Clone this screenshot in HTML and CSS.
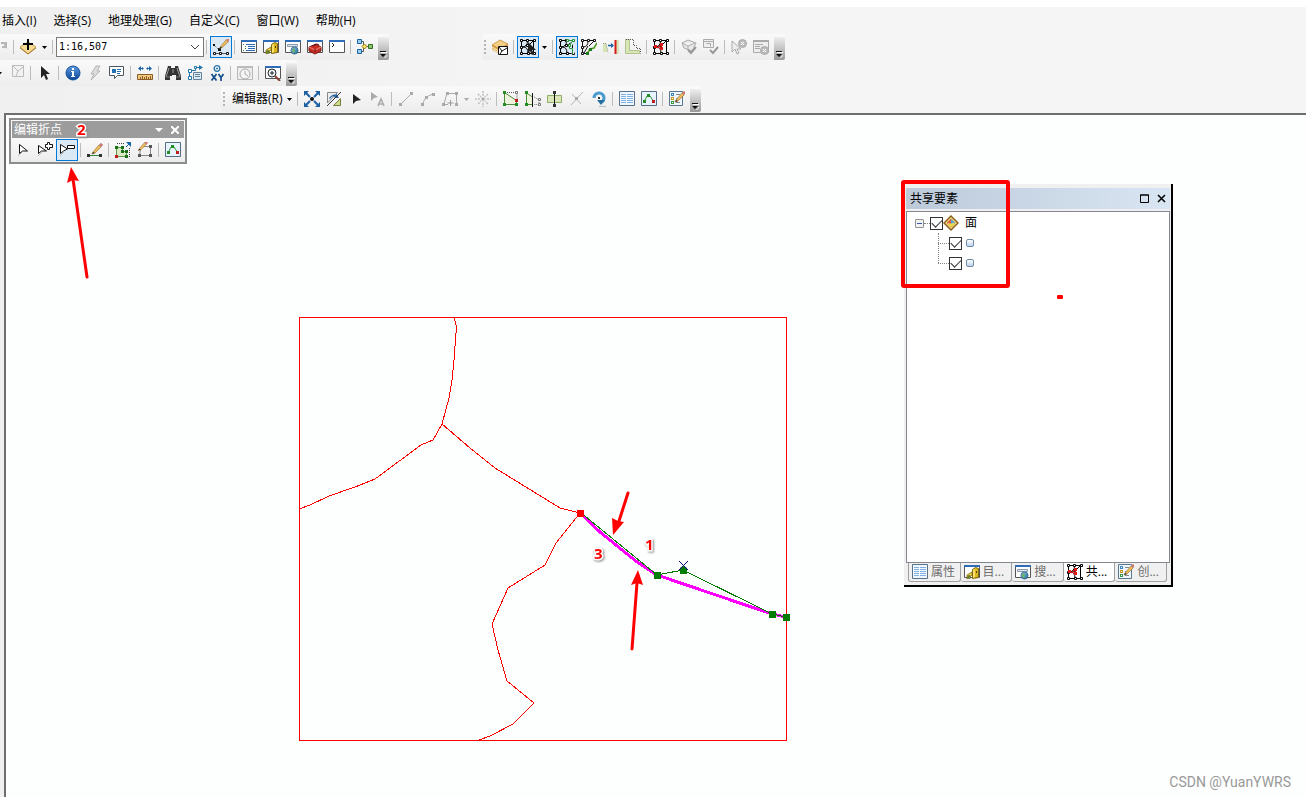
FILE: index.html
```html
<!DOCTYPE html>
<html lang="zh-CN">
<head>
<meta charset="utf-8">
<title>编辑折点</title>
<link rel="stylesheet" href="styles.css">
</head>
<body>
<svg class="sprite" aria-hidden="true">
  <defs>
    <linearGradient id="g-blue" x1="0" y1="0" x2="0" y2="1"><stop offset="0" stop-color="#5d9be0"/><stop offset="1" stop-color="#0b4796"/></linearGradient>
    <linearGradient id="g-globe" x1="0" y1="0" x2="1" y2="1"><stop offset="0" stop-color="#8cc4f0"/><stop offset="1" stop-color="#1f6e8e"/></linearGradient>
  </defs>
  <symbol id="pencil" viewBox="0 0 16 16"><path d="M6 10L12 3l2 2-6 6-3 1z" fill="#f0bd5c" stroke="#9a7333" stroke-width=".7"/><path d="M12 3l2-2 2 2-2 2z" fill="#d9776b" stroke="#a99" stroke-width=".5"/><path d="M5 12l1-2 2 1z" fill="#333"/></symbol>
  <symbol id="cut" viewBox="0 0 16 16"><path d="M9 4h3l2 3V3M14 8h-4" fill="none" stroke="#b5b5b5" stroke-width="2"/></symbol>
  <symbol id="adddata" viewBox="0 0 16 16"><path d="M0 8L8 3l8 5-8 7z" fill="#f8dc96" stroke="#c79b4b"/><path d="M0 9l8 6 8-6" fill="none" stroke="#a97a34"/><path d="M7 0h2v4h4v2H9v5H7V6H3V4h4z" fill="#000"/></symbol>
  <symbol id="editor" viewBox="0 0 16 16"><path d="M1 6l5 5" stroke="#444" stroke-dasharray="1 1"/><path d="M2 14.500h12" stroke="#555"/><path d="M.5 13.500h2v2h-2zM6.500 13.500h2v2h-2zM13.500 13.500h2v2h-2z" fill="#fff" stroke="#111"/><path d="M5 9h3v3H5zM0 5h2v2H0z" fill="#111"/><use href="#pencil" x="2" y="-2" width="15" height="15"/></symbol>
  <symbol id="win" viewBox="0 0 16 16"><path d="M.5 1.500h15v12H.5z" fill="#fff" stroke="#555"/><path d="M0 1h16v2H0z" fill="#2f6cb8"/></symbol>
  <symbol id="toc" viewBox="0 0 16 16"><use href="#win"/><path d="M2 5.500h1M4 7.500h1M4 9.500h1M2 11.500h1" stroke="#3a8a3a"/><path d="M5 5.500h9M7 7.500h7M7 9.500h7M5 11.500h9" stroke="#2b6bb5"/></symbol>
  <symbol id="catalog" viewBox="0 0 16 16"><use href="#win"/><path d="M8.500 5.500l3-2 3 1v9l-6 1z" fill="#dcb61d" stroke="#7f6810"/><path d="M9 6l2-1v8l-2 1z" fill="#f8e06a"/><path d="M12 7h1v2h-1z" fill="#554300"/><path d="M3 11l5-3v3l-5 4z" fill="#f5d84a" stroke="#7f6810" stroke-width=".8"/><circle cx="5" cy="13" r="2" fill="#6e7d2c"/></symbol>
  <symbol id="search" viewBox="0 0 16 16"><use href="#win"/><path d="M2.500 5.500h10v2h-10z" fill="#dbe6f0" stroke="#8b9aab"/><circle cx="9.500" cy="11.500" r="3.600" fill="url(#g-globe)" stroke="#315f85" stroke-width=".8"/><path d="M8 9l2 2-1 3-2-2z" fill="#70b45d"/></symbol>
  <symbol id="toolbox" viewBox="0 0 16 16"><use href="#win"/><path d="M2 8l7-3 5 3v4l-6 3-6-3z" fill="#c92e24" stroke="#7d160f"/><path d="M2 8l6 3 6-3" stroke="#ec887b" fill="none"/><path d="M6 7l4-2 2 1M8 10v3" stroke="#5a1510" fill="none"/></symbol>
  <symbol id="python" viewBox="0 0 16 16"><use href="#win"/><path d="M3 4l2 2-2 2" fill="none" stroke="#222"/></symbol>
  <symbol id="model" viewBox="0 0 16 16"><path d="M4 2.500h2.500v10H4M7 7.500h5" fill="none" stroke="#555"/><path d="M.5.5h4v4h-4zM.5 10.500h4v4h-4z" fill="#9dcdf1" stroke="#1965a5"/><path d="M7.500 5l2.500 2.500-2.500 2.500L5 7.500z" fill="#ffe568" stroke="#947610"/><path d="M11.500 5.500h4v4h-4z" fill="#86c86b" stroke="#356c24"/></symbol>
  <symbol id="selfeat" viewBox="0 0 16 16"><path d="M0 6l8-5 8 4v6l-8 4-8-4z" fill="#d99c43"/><path d="M0 6l8-5 8 4-8 5z" fill="#f6cf87" stroke="#b9812f" stroke-width=".6"/><path d="M0 8l7 4M0 10l6 3" stroke="#fff1cc"/><path d="M6.500 7.500h9v8h-9z" fill="#fff" stroke="#111"/><path d="M7 8l3 4 5-3M10 12l-2 3" fill="none" stroke="#111"/></symbol>
  <symbol id="topo" viewBox="0 0 16 16"><path d="M1.500 1.500h12v13h-12zM1.500 8q6 0 6-6M3 8q5 0 5 6M8 7l5-5" fill="none" stroke="currentColor" stroke-width="1"/><path d="M.5.5h2v2h-2zM6.500.5h2v2h-2zM13.500.5h2v2h-2zM.5 7.500h2v2h-2zM.5 13.500h2v2h-2zM7.500 13.500h2v2h-2zM13.500 13.500h2v2h-2zM6.500 5.500h2v2h-2z" fill="#fff" stroke="currentColor"/></symbol>
  <symbol id="topoedit" viewBox="0 0 16 16"><use href="#topo"/><path d="M8 3v11l2-2 2 4 2-1-2-4h4z" fill="#222"/></symbol>
  <symbol id="modedge" viewBox="0 0 16 16"><use href="#topo"/><path d="M8 1.500h6l-3 6v3h3v4" stroke="#dbe9f5" stroke-width="3" fill="none"/><path d="M8 1.500h6l-3.500 5v3h3v5" stroke="#249532" fill="none"/><path d="M7.500.5h2v2h-2zM13.500.5h2v2h-2zM9.500 5.500h2v2h-2z" fill="#fff" stroke="#249532"/></symbol>
  <symbol id="reshape" viewBox="0 0 16 16"><path d="M1 1.500h12M1.500 2v12M2 8q5 0 5-6M8 7l5-5M7 7l-4 7M2 14.500h4" stroke="#111" fill="none"/><path d="M.5.5h2v2h-2zM6.500.5h2v2h-2zM12.500.5h2v2h-2zM.5 13.500h2v2h-2zM.5 7.500h2v2h-2z" fill="#fff" stroke="#111"/><path d="M6 15l3-5 4-1 3-5" stroke="#4c9c21" fill="none" stroke-width="1.500"/><path d="M8 9h3v3H8zM5 13h3v3H5z" fill="#1d7b1b"/></symbol>
  <symbol id="align" viewBox="0 0 16 16"><path d="M0 4h3l2 9H0zM13 1h3v14h-3z" fill="#d8e5b7"/><path d="M0 4.500h3l2 9" fill="none" stroke="#999" stroke-dasharray="1 1"/><path d="M5 6.500h5" stroke="#1763a7" stroke-width="1.500"/><path d="M8 4l3 2.500L8 9z" fill="#1763a7"/><path d="M12.500 1v14" stroke="#d61d1d" stroke-width="2"/></symbol>
  <symbol id="general" viewBox="0 0 16 16"><path d="M.5.5h4v11h10v3H.5z" fill="#d8e7b4" stroke="#b4c292"/><path d="M1 .5h7.500v6h3v3h4v5" stroke="#555" stroke-dasharray="1 1" fill="none"/></symbol>
  <symbol id="share" viewBox="0 0 16 16"><use href="#topo"/><path d="M2 7l3 2V8l3-3v5L5 8" fill="none" stroke="#e01717"/><path d="M1 6h3v3H1zM7 4h3v3H7zM7 8h3v3H7z" fill="#e01717"/></symbol>
  <symbol id="validate" viewBox="0 0 16 16"><path d="M1 4l6-3 8 3-4 8-8-3zM1 4l6 3 7-3M7 7v4" fill="#e8e8e8" stroke="#aaa"/><path d="M7 11l3 3 5-6" stroke="#999" stroke-width="2" fill="none"/></symbol>
  <symbol id="validate2" viewBox="0 0 16 16"><path d="M.5.5h10v8H.5zM1 2.500h10M3.500 4.500h4v3" fill="#eee" stroke="#aaa"/><path d="M7 11l3 3 5-6" stroke="#999" stroke-width="2" fill="none"/></symbol>
  <symbol id="fixtopo" viewBox="0 0 16 16"><path d="M1 2v11l3-3 2 5 2-1-2-4h4z" fill="#eee" stroke="#aaa"/><circle cx="11.500" cy="4.500" r="4" fill="#bbb" stroke="#aaa"/><path d="M10 3l3 3M13 3l-3 3" stroke="#fff"/></symbol>
  <symbol id="inspect" viewBox="0 0 16 16"><path d="M.5 1.500h15v12H.5z" fill="#eee" stroke="#aaa"/><path d="M0 1h16v2H0z" fill="#aaa"/><path d="M2 5.500h8M2 7.500h5M2 9.500h5" stroke="#aaa"/><circle cx="11.500" cy="11.500" r="4" fill="#bbb" stroke="#aaa"/><path d="M10 10l3 3M13 10l-3 3" stroke="#fff"/></symbol>
  <symbol id="unselect" viewBox="0 0 16 16"><path d="M3.500.5h11v11h-11z" fill="#f3f3f3" stroke="#bbb"/><path d="M4 1l5 5 5-4M9 6l-2 5" stroke="#bbb" fill="none"/></symbol>
  <symbol id="pointer" viewBox="0 0 16 16"><path d="M4 1v12l3-3 2 5 2-1-2-5h4z" fill="#222"/></symbol>
  <symbol id="info" viewBox="0 0 16 16"><circle cx="8" cy="8" r="7" fill="url(#g-blue)" stroke="#15509c"/><path d="M7 3h2v2H7zM6 6h3v5h1v1H6v-1h1V7H6z" fill="#fff"/></symbol>
  <symbol id="bolt" viewBox="0 0 16 16"><path d="M9 1h4l-3 5h3L4 15l3-6H4z" fill="#ddd" stroke="#b4b4b4"/></symbol>
  <symbol id="popup" viewBox="0 0 16 16"><path d="M.5 1.500h14v9h-6l-3 3v-3h-5z" fill="#fff" stroke="#4c5762"/><path d="M3 4h4v4H3zM8 4h4v1H8zM8 6h4v1H8zM8 8h3v1H8z" fill="#2270b2"/></symbol>
  <symbol id="measure" viewBox="0 0 16 16"><path d="M2 3.500h4M10 3.500h4" stroke="#1a62a8"/><path d="M1 3.500L4 1v5zM15 3.500L12 1v5zM7 3.500L5 2v3zM9 3.500L11 2v3z" fill="#1a62a8"/><path d="M.5 9.500h15v5H.5z" fill="#f0c983" stroke="#8a5b24"/><path d="M3.500 12v2M5.500 11v3M7.500 12v2M9.500 11v3M11.500 12v2M13.500 11v3" stroke="#8a5b24"/></symbol>
  <symbol id="find" viewBox="0 0 16 16"><path d="M3 1h3v2h4V1h3l3 10v4h-5v-5H7v1H5v4H0v-4z" fill="#343434"/><path d="M4 3L1 12M12 3l3 9M8 4v4" stroke="#9a9a9a"/><path d="M1 12h4M11 12h4" stroke="#777"/></symbol>
  <symbol id="route" viewBox="0 0 16 16"><path d="M2.500 12V5.500h6v-3h4" stroke="#2476a8" fill="none"/><path d="M12 0l4 2.500-4 2.500z" fill="#2476a8"/><path d="M1.500 4.500h3v3h-3zM1.500 11.500h3v3h-3zM7.500 1.500h2v2h-2z" fill="#fff" stroke="#2476a8"/><path d="M6.500 7.500h8v7h-8z" fill="#dceaf6" stroke="#66829b"/><path d="M8 9.500h5M8 11.500h5" stroke="#66829b"/></symbol>
  <symbol id="xy" viewBox="0 0 16 16"><circle cx="8" cy="3.500" r="2.800" fill="#fff" stroke="#2874aa" stroke-width="1.300"/><circle cx="8" cy="3.500" r="1" fill="#2874aa"/><path d="M2.500 9l5 6.500M7.500 9l-5 6.500M9.500 9l2.500 3.500L14.500 9M12 12v4" stroke="#124e89" stroke-width="1.700" fill="none"/></symbol>
  <symbol id="time" viewBox="0 0 16 16"><path d="M.5 1.500h15v13H.5z" fill="#eee" stroke="#b8b8b8"/><path d="M0 1h16v2H0z" fill="#bbb"/><circle cx="8" cy="9" r="5" fill="#f5f5f5" stroke="#aaa"/><path d="M8 6v3l3 2" fill="none" stroke="#aaa"/></symbol>
  <symbol id="viewer" viewBox="0 0 16 16"><use href="#win"/><circle cx="7" cy="8" r="4" fill="#eef5fb" stroke="#222"/><path d="M5 8h4M7 6v4" stroke="#222"/><path d="M10 11l5 5" stroke="#8c4137" stroke-width="2"/></symbol>
  <symbol id="zoomall" viewBox="0 0 16 16"><path d="M2 2l4 4M14 2l-4 4M2 14l4-4M14 14l-4-4" stroke="#1d5fa3" stroke-width="2"/><path d="M0 0h5L0 5zM16 0v5l-5-5zM0 16v-5l5 5zM16 16h-5l5-5z" fill="#1d5fa3"/><circle cx="8" cy="8" r="2" fill="#111"/></symbol>
  <symbol id="swap" viewBox="0 0 16 16"><path d="M1.500 1.500h10L1.500 12z" fill="#eee" stroke="#888"/><path d="M3 7q4-5 7-3V2l3 5H8l1-1Q6 4 4 8z" fill="#2768ac"/><path d="M1 15L15 1" stroke="#333"/><path d="M14.500 7.500v7h-7z" fill="#cddb8d" stroke="#75803f"/></symbol>
  <symbol id="edittool" viewBox="0 0 16 16"><path d="M5 3v10l3-3 5-1z" fill="#222"/></symbol>
  <symbol id="annotool" viewBox="0 0 16 16"><path d="M1 1v9l3-3 4-1z" fill="#aaa"/><path d="M8 15l3-7 3 7M9 13h4" fill="none" stroke="#aaa" stroke-width="1.500"/></symbol>
  <symbol id="line" viewBox="0 0 16 16"><path d="M2 14L14 2" stroke="#aaa"/><path d="M1 12h3v3H1zM12 1h3v3h-3z" fill="#aaa"/></symbol>
  <symbol id="arc" viewBox="0 0 16 16"><path d="M3 14q0-8 10-11" stroke="#aaa" fill="none"/><path d="M1 12h3v3H1zM5 5h3v3H5zM12 2h3v3h-3z" fill="#aaa"/></symbol>
  <symbol id="trace" viewBox="0 0 16 16"><path d="M5 2.500h9.500v11M1 13.500h5M5 2L2 13" stroke="#aaa" fill="none"/><path d="M4 1h3v3H4zM13 1h3v3h-3zM0 12h3v3H0zM13 12h3v3h-3z" fill="#aaa"/><path d="M8.500 9v6M5.500 12h6" stroke="#999"/></symbol>
  <symbol id="point" viewBox="0 0 16 16"><path d="M8 0v16M0 8h16M3 3l10 10M13 3L3 13" stroke="#c0c0c0" stroke-width="1.500" stroke-dasharray="2 1"/><path d="M6 6h4v4H6z" fill="#aaa" stroke="#f5f5f5"/></symbol>
  <symbol id="editvert" viewBox="0 0 16 16"><path d="M1.500 1.500v12h12v-4z" fill="#eef4dc" stroke="#4f8b3b"/><path d="M2 1.500h12v8" stroke="#555" stroke-dasharray="1 1" fill="none"/><path d="M0 0h3v3H0zM0 12h3v3H0zM12 12h3v3h-3z" fill="#218d23"/><path d="M12 8h3v3h-3z" fill="#c21d1d"/><path d="M12.500.5h2v2h-2z" fill="#fff" stroke="#777"/></symbol>
  <symbol id="reshape2" viewBox="0 0 16 16"><path d="M1.500 2v11.500h6V6z" fill="#eef4dc" stroke="#4f8b3b"/><path d="M9 6l5 3v4.500H9" stroke="#777" stroke-dasharray="1 1" fill="none"/><path d="M0 0h3v3H0zM0 12h3v3H0z" fill="#218d23"/><path d="M7.500 2v14" stroke="#111"/><path d="M13.500 7.500h2v2h-2zM13.500 12.500h2v2h-2z" fill="#fff" stroke="#777"/></symbol>
  <symbol id="cutpoly" viewBox="0 0 16 16"><path d="M.5 4.500h14v7H.5z" fill="#dbe7b9" stroke="#8fae66"/><path d="M7.500 1v14" stroke="#111"/><path d="M6 0h3v3H6zM6 13h3v3H6z" fill="#333"/></symbol>
  <symbol id="split" viewBox="0 0 16 16"><path d="M2 14L14 1M3 3l9 10" stroke="#b5b5b5"/><path d="M6 6h3v3H6z" fill="#aaa"/></symbol>
  <symbol id="rotate" viewBox="0 0 16 16"><path d="M3 7a5 5 0 1 1 8 4" fill="none" stroke="#4a9bce" stroke-width="3"/><path d="M6 9h8l-4 5z" fill="#26709f"/><path d="M7 6h2v2H7z" fill="#333"/><path d="M8 15.500h7" stroke="#bbb"/></symbol>
  <symbol id="table" viewBox="0 0 16 16"><path d="M.5.5h15v14H.5z" fill="#f1f8ff" stroke="#57718a"/><path d="M2 3.500h5M8 3.500h6M2 5.500h5M8 5.500h6M2 7.500h5M8 7.500h6M2 9.500h5M8 9.500h6M2 11.500h5M8 11.500h6" stroke="#7fb0df"/><path d="M7.500 2v11" stroke="#f1f8ff"/></symbol>
  <symbol id="sketch" viewBox="0 0 16 16"><path d="M.5.5h15v14H.5z" fill="#e7f4ff" stroke="#536d87"/><path d="M3 11l3-6h3l4 6" fill="none" stroke="#2d9338"/><path d="M6 3h3v3H6zM2 9h3v3H2z" fill="#218d23"/><path d="M11 9h3v3h-3z" fill="#c21d1d"/></symbol>
  <symbol id="create" viewBox="0 0 16 16"><path d="M.5.5h13v14H.5z" fill="#eef7ff" stroke="#5a7791"/><path d="M2 2h3v3H2z" fill="#3f84c4"/><path d="M2 6h3v3H2z" fill="#c6971f"/><path d="M2 10h3v3H2z" fill="#389447"/><path d="M3 3h1v1H3zM3 7h1v1H3zM3 11h1v1H3z" fill="#fff"/><path d="M7 3.500h4M7 7.500h2M7 11.500h4" stroke="#888"/><use href="#pencil" x="1" y="-1"/></symbol>
  <symbol id="vsel" viewBox="0 0 16 16"><path d="M3 14l4-4" stroke="#bbb"/><path d="M4.500 2.500v9l3-2.500h5z" fill="#fff" stroke="#111"/></symbol>
  <symbol id="vadd" viewBox="0 0 16 16"><path d="M1 14l4-4" stroke="#bbb"/><path d="M1.500 3.500v8l3-2.500h5z" fill="#fff" stroke="#111"/><path d="M10.500.5h2v2h3v3h-3v2h-2v-2h-2v-3h2z" fill="#fff" stroke="#111"/></symbol>
  <symbol id="vdel" viewBox="0 0 16 16"><path d="M1 14l4-4" stroke="#bbb"/><path d="M1.500 2.500v9l3-2.500 4-2z" fill="#fff" stroke="#111"/><path d="M8.500 3.500h7v3h-7z" fill="#fff" stroke="#111"/></symbol>
  <symbol id="cont" viewBox="0 0 16 16"><path d="M2 13.500h11" stroke="#2b8a34"/><path d="M0 12h3v3H0zM12 12h3v3h-3z" fill="#333"/><use href="#pencil"/></symbol>
  <symbol id="mod" viewBox="0 0 16 16"><path d="M1.500 5.500h6v4h4v5h-10z" fill="#dceac4" stroke="#5d9a45"/><path d="M0 4h3v3H0zM6 4h3v3H6zM6 8h3v3H6zM10 8h3v3h-3zM10 13h3v3h-3z" fill="#197019"/><path d="M0 13h3v3H0z" fill="#c21d1d"/><path d="M2 1.500h8M14.500 6v10" stroke="#444" stroke-dasharray="1 1"/><path d="M11 0h5v5z" fill="#1763a7"/><path d="M11 5l3-3" stroke="#1763a7"/></symbol>
  <symbol id="finish" viewBox="0 0 16 16"><path d="M7 4.500h6.500v9h-11l1-6" fill="none" stroke="#888"/><path d="M12 3h3v3h-3zM1 12h3v3H1zM12 12h3v3h-3z" fill="#555"/><use href="#pencil" x="-3" y="-2" width="14" height="14"/></symbol>
  <symbol id="layer" viewBox="0 0 16 16"><path d="M8 1l7 7-7 7-7-7z" fill="#f6d680" stroke="#8c6222" stroke-width="1.500"/><path d="M8 4l4 4-4 4-4-4z" fill="#fff" stroke="#936721" stroke-width=".6"/><path d="M8 4L4 8l4 1z" fill="#e65a31"/><path d="M8 4l4 4-4 1z" fill="#51a7db"/><path d="M5 9l3 3 4-4z" fill="#f0e03e"/></symbol>
  <symbol id="down" viewBox="0 0 5 3"><path d="M0 0h5L2.500 3z" fill="currentColor"/></symbol>
  <symbol id="overflow" viewBox="0 0 7 7"><path d="M1 1h6v1H1zM4 7l3-3v1L5 7z" fill="#fff"/><path d="M0 0h6v1H0zM0 3h6L3 6z" fill="#111"/></symbol>
</svg>

<div class="app">
  <header class="chrome">
    <nav class="menu">
      <button>插入(I)</button><button>选择(S)</button><button>地理处理(G)</button><button>自定义(C)</button><button>窗口(W)</button><button>帮助(H)</button>
    </nav>
    <div class="row">
      <div class="bar bar-standard">
        <button class="tool tool-clipped" aria-label="粘贴"><svg><use href="#cut"/></svg></button><i class="sep"></i>
        <button class="tool" aria-label="添加数据"><svg><use href="#adddata"/></svg></button><button class="caret" aria-label="更多数据"><svg><use href="#down"/></svg></button><i class="sep"></i>
        <label class="scale"><select aria-label="比例尺"><option>1:16,507</option></select><svg viewBox="0 0 10 6"><path d="M1 1l4 4 4-4" fill="none" stroke="#444"/></svg></label><i class="sep"></i>
        <button class="tool is-on" aria-label="编辑器工具条"><svg><use href="#editor"/></svg></button><i class="sep"></i>
        <button class="tool" aria-label="内容列表"><svg><use href="#toc"/></svg></button><button class="tool" aria-label="目录"><svg><use href="#catalog"/></svg></button><button class="tool" aria-label="搜索"><svg><use href="#search"/></svg></button><button class="tool" aria-label="工具箱"><svg><use href="#toolbox"/></svg></button><button class="tool" aria-label="Python"><svg><use href="#python"/></svg></button><i class="sep"></i>
        <button class="tool" aria-label="模型构建器"><svg><use href="#model"/></svg></button><button class="more" aria-label="工具条选项"><svg><use href="#overflow"/></svg></button>
      </div>
      <div class="bar bar-topology">
        <i class="grip"></i><button class="tool" aria-label="选择拓扑"><svg><use href="#selfeat"/></svg></button><i class="sep"></i>
        <button class="tool is-on" aria-label="拓扑编辑"><svg><use href="#topoedit"/></svg></button><button class="caret" aria-label="拓扑编辑选项"><svg><use href="#down"/></svg></button><i class="sep"></i>
        <button class="tool is-on" aria-label="修改边"><svg><use href="#modedge"/></svg></button><button class="tool" aria-label="修整边"><svg><use href="#reshape"/></svg></button><button class="tool" aria-label="对齐边"><svg><use href="#align"/></svg></button><button class="tool" aria-label="概化边"><svg><use href="#general"/></svg></button><i class="sep"></i>
        <button class="tool" aria-label="共享要素"><svg><use href="#share"/></svg></button><i class="sep"></i>
        <button class="tool" aria-label="验证区域" disabled><svg><use href="#validate"/></svg></button><button class="tool" aria-label="验证范围" disabled><svg><use href="#validate2"/></svg></button><i class="sep"></i>
        <button class="tool" aria-label="修复错误" disabled><svg><use href="#fixtopo"/></svg></button><button class="tool" aria-label="错误检查器" disabled><svg><use href="#inspect"/></svg></button><button class="more" aria-label="工具条选项"><svg><use href="#overflow"/></svg></button>
      </div>
    </div>
    <div class="row">
      <div class="bar bar-tools">
        <button class="caret caret-clipped" aria-label="选择方式"><svg><use href="#down"/></svg></button><button class="tool" aria-label="清除选择" disabled><svg><use href="#unselect"/></svg></button><i class="sep"></i>
        <button class="tool" aria-label="选择元素"><svg><use href="#pointer"/></svg></button><i class="sep"></i>
        <button class="tool" aria-label="识别"><svg><use href="#info"/></svg></button><button class="tool" aria-label="超链接" disabled><svg><use href="#bolt"/></svg></button><button class="tool" aria-label="HTML 弹出窗口"><svg><use href="#popup"/></svg></button><i class="sep"></i>
        <button class="tool" aria-label="测量"><svg><use href="#measure"/></svg></button><i class="sep"></i>
        <button class="tool" aria-label="查找"><svg><use href="#find"/></svg></button><button class="tool" aria-label="查找路径"><svg><use href="#route"/></svg></button><button class="tool" aria-label="转到 XY"><svg><use href="#xy"/></svg></button><i class="sep"></i>
        <button class="tool" aria-label="时间滑块" disabled><svg><use href="#time"/></svg></button><i class="sep"></i>
        <button class="tool" aria-label="查看器窗口"><svg><use href="#viewer"/></svg></button><button class="more" aria-label="工具条选项"><svg><use href="#overflow"/></svg></button>
      </div>
    </div>
    <div class="row row-last">
      <div class="bar bar-editor">
        <i class="grip"></i><button class="editor-menu">编辑器(R)<svg><use href="#down"/></svg></button><i class="sep"></i>
        <button class="tool" aria-label="缩放至所选"><svg><use href="#zoomall"/></svg></button><button class="tool" aria-label="切换"><svg><use href="#swap"/></svg></button><button class="tool" aria-label="编辑工具"><svg><use href="#edittool"/></svg></button><button class="tool" aria-label="编辑注记" disabled><svg><use href="#annotool"/></svg></button><i class="sep"></i>
        <button class="tool" aria-label="直线段" disabled><svg><use href="#line"/></svg></button><button class="tool" aria-label="弧段" disabled><svg><use href="#arc"/></svg></button><button class="tool" aria-label="追踪" disabled><svg><use href="#trace"/></svg></button><button class="caret caret-off" aria-label="构造方法" disabled><svg><use href="#down"/></svg></button><button class="tool" aria-label="点" disabled><svg><use href="#point"/></svg></button><i class="sep"></i>
        <button class="tool" aria-label="编辑折点"><svg><use href="#editvert"/></svg></button><button class="tool" aria-label="整形要素"><svg><use href="#reshape2"/></svg></button><button class="tool" aria-label="裁剪面"><svg><use href="#cutpoly"/></svg></button><button class="tool" aria-label="分割" disabled><svg><use href="#split"/></svg></button><button class="tool" aria-label="旋转"><svg><use href="#rotate"/></svg></button><i class="sep"></i>
        <button class="tool" aria-label="属性"><svg><use href="#table"/></svg></button><button class="tool" aria-label="草图属性"><svg><use href="#sketch"/></svg></button><i class="sep"></i>
        <button class="tool" aria-label="创建要素"><svg><use href="#create"/></svg></button><button class="more" aria-label="工具条选项"><svg><use href="#overflow"/></svg></button>
      </div>
    </div>
  </header>

  <main class="map">
    <svg class="layer-svg" viewBox="6 115 1300 682" width="1300" height="682" aria-hidden="true">
      <g fill="none" stroke="#f00" shape-rendering="crispEdges">
        <path d="M299.500 317.500h487v423h-487z"/>
        <path d="M454 317l2 8v8l-2 27-2 20-3 18-7 26-9 16-12 5-46 34-20 8-26 9-19 9-11 4"/>
        <path d="M442 424l28 24 25 20 65 40 20 5"/>
        <path d="M580 513l-24 30-11 22-37 23-16 36 6 26 9 31 27 22-21 21-23 12-11 4"/>
      </g>
      <path d="M580 513l20 19 37 30 20 13 115 39 14 3" fill="none" stroke="#f0f" stroke-width="3" shape-rendering="crispEdges"/>
      <path d="M580 512l77 63 26-5 89 44 14 3" fill="none" stroke="#007c00" shape-rendering="crispEdges"/>
      <path d="M577 510h7v7h-7z" fill="#f00"/>
      <path d="M654 572h7v7h-7zM769 611h7v7h-7zM783 614h7v7h-7zM680 568l3-2 4 2v6h-7z" fill="#007c00"/>
      <path d="M679 561l9 9M688 561l-9 9" stroke="#000080"/>
    </svg>

    <section class="vertex-bar">
      <div class="vertex-title"><span>编辑折点</span><button aria-label="选项"><svg viewBox="0 0 8 4"><path d="M0 0h8L4 4z" fill="#fff"/></svg></button><button aria-label="关闭"><svg viewBox="0 0 8 8"><path d="M0 0l8 8M8 0L0 8" stroke="#fff" stroke-width="2"/></svg></button></div>
      <div class="vertex-tools">
        <button class="tool" aria-label="修改草图折点"><svg><use href="#vsel"/></svg></button><button class="tool" aria-label="添加折点"><svg><use href="#vadd"/></svg></button><button class="tool is-on" aria-label="删除折点"><svg><use href="#vdel"/></svg></button><i class="sep"></i>
        <button class="tool" aria-label="延续要素"><svg><use href="#cont"/></svg></button><i class="sep"></i>
        <button class="tool" aria-label="拉伸要素"><svg><use href="#mod"/></svg></button><button class="tool" aria-label="完成草图"><svg><use href="#finish"/></svg></button><i class="sep"></i>
        <button class="tool" aria-label="草图属性"><svg><use href="#sketch"/></svg></button>
      </div>
    </section>

    <aside class="panel">
      <div class="panel-title"><span>共享要素</span><button aria-label="最大化"><svg viewBox="0 0 9 9"><path d="M.5 1h8v7.500h-8zM0 1h9" fill="none" stroke="#000"/></svg></button><button aria-label="关闭"><svg viewBox="0 0 9 9"><path d="M1 1l7 7M8 1L1 8" stroke="#000" stroke-width="1.500"/></svg></button></div>
      <div class="tree">
        <div class="node"><button class="expander" aria-label="折叠"></button><i class="dots"></i><input id="n0" type="checkbox" checked><label for="n0"><svg class="ic16"><use href="#layer"/></svg>面</label></div>
        <div class="kids">
          <div class="node"><i class="dots"></i><input id="n1" type="checkbox" checked aria-label="要素 1"><i class="chip"></i></div>
          <div class="node"><i class="dots"></i><input id="n2" type="checkbox" checked aria-label="要素 2"><i class="chip"></i></div>
        </div>
      </div>
      <div class="tabs">
        <button><svg><use href="#table"/></svg>属性</button><button><svg><use href="#catalog"/></svg>目...</button><button><svg><use href="#search"/></svg>搜...</button><button class="is-current"><svg><use href="#share"/></svg>共...</button><button><svg><use href="#create"/></svg>创...</button>
      </div>
    </aside>

    <svg class="layer-svg notes" viewBox="6 115 1300 682" width="1300" height="682">
      <g stroke="#f00" stroke-width="3" stroke-linecap="round"><path d="M87 277L73 179M628 493l-9 28M632 649l5-66"/></g>
      <path d="M71 167l8 14-6-1-6 3zM613 535l-1-17 6 3 6 1zM638 570l5 15-6-2-6 2z" fill="#f00"/>
      <rect x="903" y="182" width="105" height="104" rx="1" fill="none" stroke="#f00" stroke-width="4"/>
      <rect x="1057" y="295" width="6" height="4" rx="1" fill="#f00"/>
      <g class="digits"><text x="77" y="135">2</text><text x="645" y="550">1</text><text x="594" y="559">3</text></g>
    </svg>
    <p class="watermark">CSDN @YuanYWRS</p>
  </main>
</div>
</body>
</html>
```

FILE: styles.css
```css
* { box-sizing: border-box; }

body {
  margin: 0;
  background: #fff;
  color: #000;
  font: 12px/16px "Open Sans", "Noto Sans CJK SC", sans-serif;
}

button {
  margin: 0;
  padding: 0;
  border: 0;
  background: none;
  color: inherit;
  font: inherit;
}

svg { display: block; flex: none; }
.sprite { position: absolute; width: 0; height: 0; }

.app {
  display: flex;
  flex-direction: column;
  min-height: 100vh;
  padding-top: 7px;
  background: linear-gradient(#fff 7px, #f0f0f0 7px);
}

/* Menu and docked toolbars */
.chrome {
  background: linear-gradient(90deg, #f0f0f0, #f5f5f5 50%);
}

.menu {
  display: flex;
  gap: 17px;
  height: 27px;
  padding-left: 2px;
  align-items: center;
}

.row { display: flex; height: 26px; }
.row-last { height: 27px; }

.bar {
  display: flex;
  align-items: center;
  height: 26px;
  border-radius: 2px;
  background: linear-gradient(#fafafa, #ededed);
}

.bar-topology { margin-left: 93px; }
.bar-editor { margin-left: 221px; }

.tool {
  display: grid;
  place-items: center;
  flex: none;
  width: 22px;
  height: 22px;
}

.tool svg, .ic16 { width: 16px; height: 16px; }
.tool-clipped { width: 11px; overflow: hidden; justify-content: end; padding-right: 3px; }
.is-on { background: #dbe9f5; box-shadow: inset 0 0 0 1px #0078d7; }

.sep { flex: none; width: 6px; height: 14px; }
.sep::before {
  content: "";
  display: block;
  width: 1px;
  height: 14px;
  margin-left: 2px;
  background: #bcbcbc;
}

.caret {
  display: grid;
  place-items: center;
  width: 11px;
  height: 22px;
}
.caret svg, .editor-menu svg { width: 5px; height: 3px; }
.caret-clipped { width: 6px; justify-content: start; overflow: hidden; }
.caret-clipped svg { margin-left: -3px; }
.caret-off { color: #aaa; }

.grip {
  width: 7px;
  height: 14px;
  border-left: 2px dotted #b4b4b4;
  margin-left: 2px;
  margin-right: -2px;
}

.more {
  display: grid;
  place-items: end center;
  align-self: flex-end;
  width: 11px;
  height: 23px;
  margin-left: 2px;
  padding-bottom: 2px;
  border-radius: 0 2px 2px 0;
  background: linear-gradient(#eee, #999);
}
.more svg { width: 7px; height: 7px; }

.scale {
  display: grid;
  width: 148px;
  height: 20px;
  align-items: center;
}
.scale select, .scale svg { grid-area: 1 / 1; }
.scale select {
  appearance: none;
  width: 100%;
  height: 20px;
  padding: 0 2px;
  border: 1px solid #7a7a7a;
  border-radius: 0;
  background: #fff;
  color: #000;
  font: 10px/16px "DejaVu Sans Mono", monospace;
}
.scale svg {
  width: 10px;
  height: 6px;
  margin-right: 4px;
  justify-self: end;
  pointer-events: none;
}

.editor-menu {
  display: flex;
  align-items: center;
  justify-content: space-between;
  width: 67px;
  padding: 0 3px 0 4px;
}

/* Map canvas */
.map {
  position: relative;
  flex: 1;
  overflow: hidden;
  border-top: 2px solid #6e6e6e;
  border-left: 2px solid #6e6e6e;
  margin-left: 4px;
  background: #fdfefe;
}
.layer-svg { position: absolute; left: 0; top: 0; }

.notes { pointer-events: none; }
.digits {
  fill: #f00;
  stroke: #fff;
  stroke-width: 3px;
  paint-order: stroke;
  font: bold 15px "Open Sans", sans-serif;
  filter: drop-shadow(1px 1px 1px #888);
}

.vertex-bar {
  position: absolute;
  left: 3px;
  top: 3px;
  width: 178px;
  border: 2px solid #8c8c8c;
  background: #f7f7f7;
}
.vertex-title {
  display: flex;
  align-items: center;
  gap: 8px;
  height: 17px;
  margin: 1px 1px 0;
  padding: 0 5px 0 2px;
  background: #9c9c9c;
  color: #fff;
}
.vertex-title span { flex: 1; }
.vertex-title svg { width: 8px; }
.vertex-tools {
  display: flex;
  align-items: center;
  height: 24px;
  padding-left: 1px;
  background: linear-gradient(#fafafa, #ececec);
}

.panel {
  position: absolute;
  left: 898px;
  top: 69px;
  width: 269px;
  padding: 4px 1px 3px 2px;
  border-right: 2px solid #000;
  border-bottom: 2px solid #000;
  background: #f0f0f0;
}
.panel-title {
  display: flex;
  align-items: center;
  gap: 8px;
  height: 21px;
  padding: 0 4px;
  background: linear-gradient(90deg, #bccada, #d9e5f2);
}
.panel-title span { flex: 1; }
.panel-title svg { width: 9px; height: 9px; }

.tree {
  height: 352px;
  margin-top: 2px;
  padding: 1px 0 0 8px;
  border: 1px solid #828790;
  background: #fff;
}
.node { display: flex; align-items: center; height: 20px; }
.node label { display: flex; align-items: center; gap: 6px; }
.dots { width: 11px; border-top: 1px dotted #808080; }
.node > .expander + .dots { width: 6px; }
.expander {
  display: grid;
  place-items: center;
  width: 9px;
  height: 9px;
  border: 1px solid #919191;
  border-radius: 1px;
  background: #f2f2f2;
}
.expander::before { content: ""; width: 5px; height: 1px; background: #3c5aa8; }

.node input {
  appearance: none;
  display: grid;
  place-items: center;
  width: 13px;
  height: 13px;
  margin: 0;
  border: 1px solid #333;
  background: #fff;
}
.node input:checked::before {
  content: "";
  width: 9px;
  height: 5px;
  border-left: 1px solid #333;
  border-bottom: 1px solid #333;
  transform: translateY(-1px) rotate(-45deg);
}
.kids {
  position: relative;
  margin-left: 23px;
}
.kids::before {
  content: "";
  position: absolute;
  left: 0;
  top: 0;
  height: 30px;
  border-left: 1px dotted #808080;
}
.chip {
  width: 8px;
  height: 8px;
  margin-left: 4px;
  border: 1px solid #6f8ba8;
  border-radius: 2px;
  background: linear-gradient(#fff, #bcd3ea);
}

.tabs {
  display: flex;
  padding: 0 3px 0 2px;
}
.tabs button {
  display: flex;
  flex: 1;
  align-items: center;
  gap: 3px;
  height: 19px;
  padding-left: 3px;
  border: 1px solid #a0a0a0;
  border-top: 0;
  border-left-width: 0;
  border-radius: 0 0 3px 3px;
  color: #6d6d6d;
  white-space: nowrap;
}
.tabs button:first-child { border-left-width: 1px; }
.tabs svg { width: 16px; height: 16px; color: #000; }
.tabs .is-current { background: #fff; color: #000; }

.watermark {
  position: absolute;
  right: 15px;
  bottom: 6px;
  margin: 0;
  color: #999;
  font: 14px/18px Roboto, sans-serif;
}
```
